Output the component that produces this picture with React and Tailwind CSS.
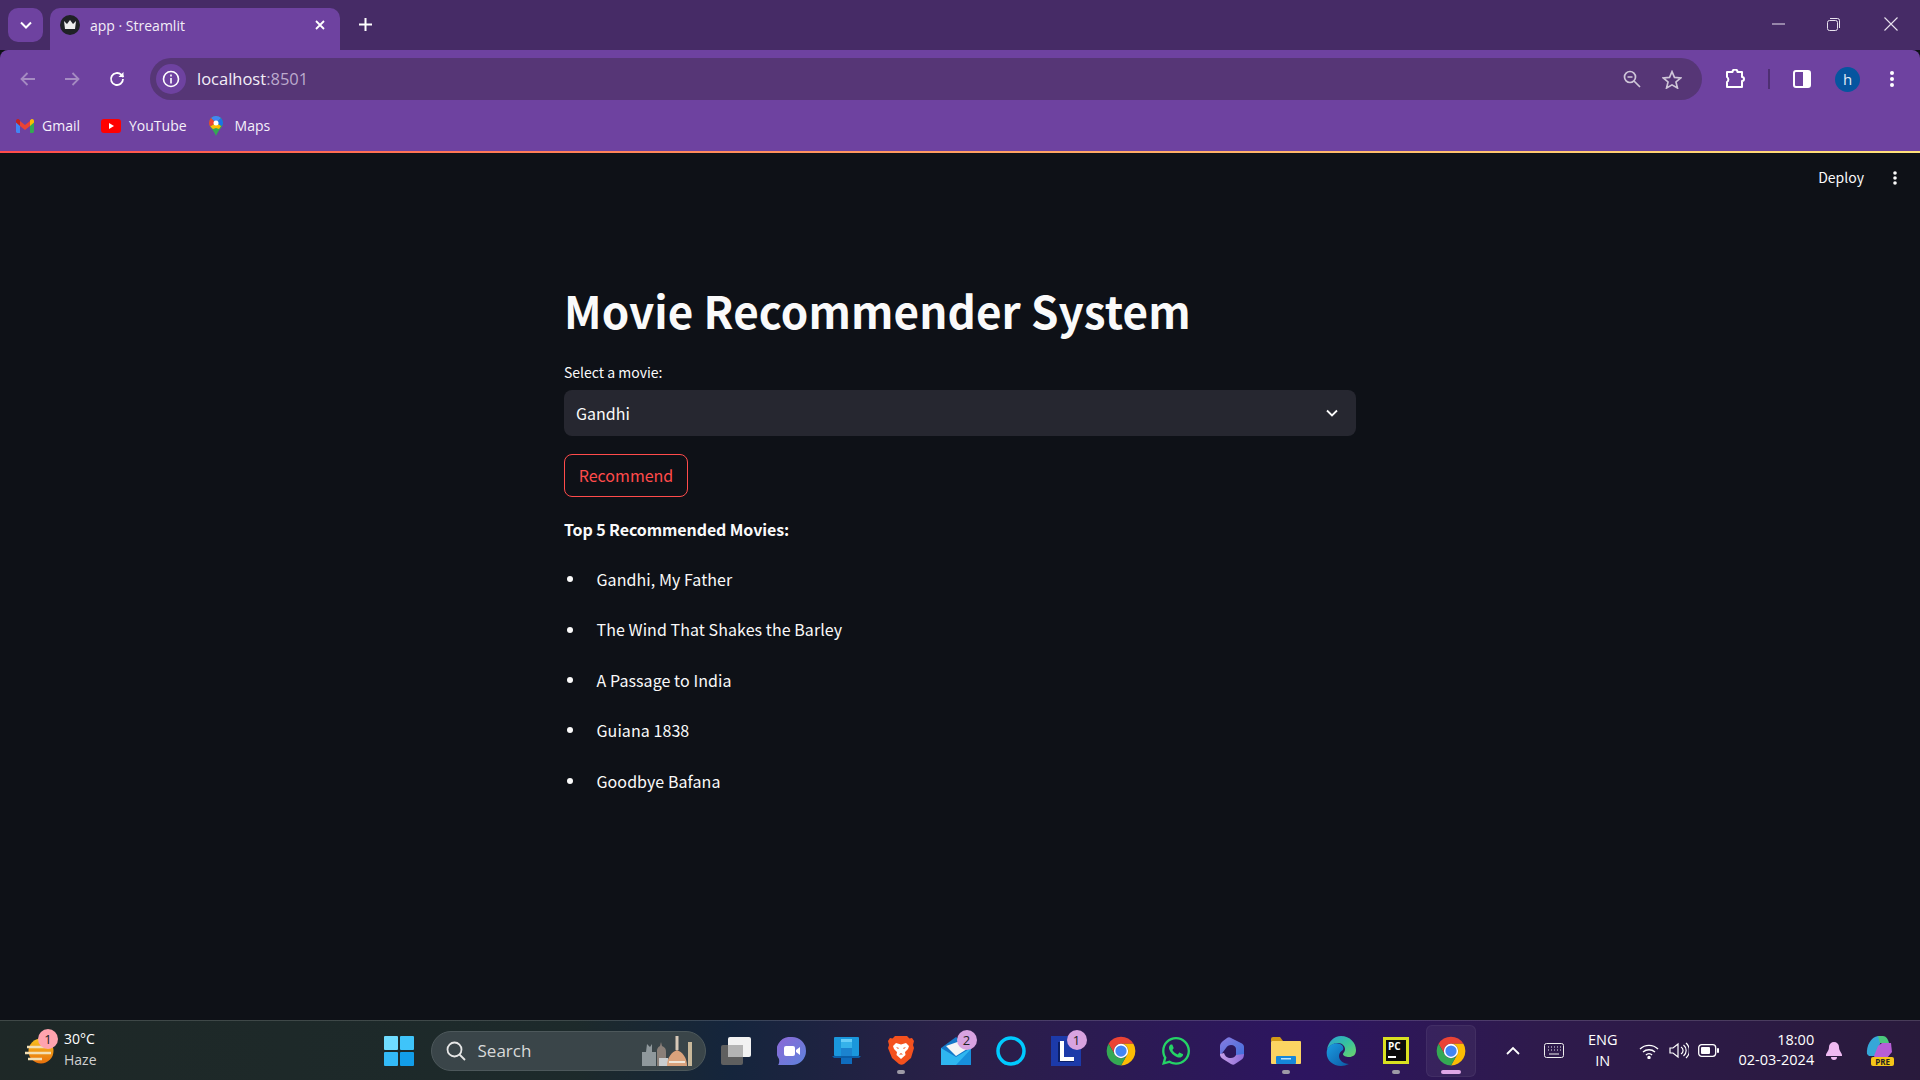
import React from 'react'
import { FaWhatsapp } from 'react-icons/fa'

const sans = "font-['Noto_Sans_CJK_SC','Noto_Sans',sans-serif]"
const ui = "font-['Open_Sans','Noto_Sans',sans-serif]"

const movies = ['Gandhi, My Father', 'The Wind That Shakes the Barley', 'A Passage to India', 'Guiana 1838', 'Goodbye Bafana']

const GmailIcon = () => (
  <svg width="18" height="14" viewBox="0 0 18 14">
    <path d="M0 2v10.5C0 13.3.7 14 1.5 14H4V6z" fill="#4285f4" />
    <path d="M18 2v10.5c0 .8-.7 1.5-1.5 1.5H14V6z" fill="#34a853" />
    <path d="M4 7V2L9 6l5-4v5L9 11z" fill="#ea4335" />
    <path d="M0 3.5V2C0 .3 1.8-.5 3 .5L4 1.3V7z" fill="#c5221f" />
    <path d="M18 3.5V2c0-1.7-1.8-2.5-3-1.5l-1 .8V7z" fill="#fbbc04" />
  </svg>
)

const YoutubeIcon = () => (
  <svg width="20" height="14" viewBox="0 0 20 14">
    <rect width="20" height="14" rx="3" fill="#f00" />
    <path d="M8 4l5 3-5 3z" fill="#fff" />
  </svg>
)

const MapsIcon = () => (
  <svg width="14" height="20" viewBox="0 0 14 20">
    <path d="M7 0a7 7 0 0 1 7 7c0 4-4 6-7 13C4 13 0 11 0 7a7 7 0 0 1 7-7z" fill="#34a853" />
    <path d="M2 2a7 7 0 0 1 5-2 7 7 0 0 1 5 2L7 7z" fill="#4285f4" />
    <path d="M2 2a7 7 0 0 0-2 5c0 1.5.5 2.5 1.3 3.5L7 7z" fill="#ea4335" />
    <path d="M12 2a7 7 0 0 1 2 5c0 1-.3 2-1 3L7 7z" fill="#1a73e8" />
    <path d="M1.3 10.5L7 7l5 3-2 3-3-1-3 1z" fill="#fbbc04" />
    <circle cx="7" cy="7" r="2.5" fill="#fff" />
  </svg>
)

const ChromeIcon = ({ size = 30 }) => (
  <svg width={size} height={size} viewBox="0 0 48 48">
    <path d="M24 12.5H43.9A23 23 0 0 0 4.1 12.5L14 29.75A11.5 11.5 0 0 1 24 12.5z" fill="#ea4335" />
    <path d="M33.96 29.75L24 47A23 23 0 0 0 43.9 12.5H24A11.5 11.5 0 0 1 33.96 29.75z" fill="#fbbc04" />
    <path d="M14 29.75L4.1 12.5A23 23 0 0 0 24 47L33.96 29.75A11.5 11.5 0 0 1 14 29.75z" fill="#34a853" />
    <circle cx="24" cy="24" r="11.5" fill="#fff" />
    <circle cx="24" cy="24" r="9" fill="#4285f4" />
  </svg>
)

const Badge = ({ n }) => (
  <span className={`absolute left-[28px] top-[5px] w-5 h-5 rounded-full bg-[#d8a3e0] text-[13px] leading-[20px] text-center text-[#222] ${ui}`}>{n}</span>
)

const TaskIcon = ({ children, dot, active }) => (
  <div className={`relative h-[52px] flex items-center justify-center rounded-md ${active ? 'w-[50px] mx-[2.5px] bg-white/5 border border-white/5' : 'w-[55px]'}`}>
    {children}
    {dot && <span className="absolute bottom-[3px] left-1/2 -translate-x-1/2 w-2 h-1 rounded-full bg-[#9d9aa6]" />}
    {active && <span className="absolute bottom-[2px] left-1/2 -translate-x-1/2 w-5 h-1 rounded-full bg-[#dfa6e6]" />}
  </div>
)

export default function App() {
  return (
    <div className="w-[1920px] h-[1080px] flex flex-col overflow-hidden bg-[#0e1117]">
      {/* tab strip */}
      <div className="h-[50px] shrink-0 bg-[#462b66] flex items-start pl-2 text-white">
        <div className="w-[35px] h-[34px] mt-2 rounded-[10px] bg-[#6e42a0] flex items-center justify-center">
          <svg width="12" height="8" viewBox="0 0 12 8" fill="none" stroke="#fff" strokeWidth="2"><path d="M1 1.5l5 5 5-5" /></svg>
        </div>
        <div className="w-[290px] h-[42px] mt-2 ml-[7px] rounded-t-[10px] bg-[#6e42a0] flex items-center pl-[10px] pr-[15px] pb-2">
          <span className="w-5 h-5 rounded-full bg-[#1f2126] flex items-center justify-center">
            <svg width="14" height="10" viewBox="0 0 14 10"><path d="M1 1l3 3 3-4 3 4 3-3-1 8H2z" fill="#eee" /></svg>
          </span>
          <span className={`ml-[10px] text-[14px] text-[#f2edf7] ${ui}`}>app · Streamlit</span>
          <svg className="ml-auto" width="10" height="10" viewBox="0 0 10 10" stroke="#fff" strokeWidth="1.8"><path d="M1 1l8 8M9 1l-8 8" /></svg>
        </div>
        <svg className="ml-[19px] mt-[18px]" width="13" height="13" viewBox="0 0 13 13" stroke="#fff" strokeWidth="2"><path d="M6.5 0v13M0 6.5h13" /></svg>
        <div className="ml-auto flex items-center h-[50px] pr-[22px] pb-[2px]">
          <svg className="mr-[42px]" width="13" height="2" viewBox="0 0 13 2"><path d="M0 1h13" stroke="#e8e2ee" /></svg>
          <svg className="mr-[44px]" width="13" height="13" viewBox="0 0 13 13" fill="none" stroke="#e8e2ee"><rect x=".5" y="2.5" width="10" height="10" rx="2" /><path d="M3 .5h7.5a2 2 0 0 1 2 2V10" /></svg>
          <svg width="14" height="14" viewBox="0 0 14 14" stroke="#e8e2ee" strokeWidth="1.1"><path d="M.5.5l13 13M13.5.5l-13 13" /></svg>
        </div>
      </div>

      {/* toolbar */}
      <div className="h-[58px] shrink-0 bg-[#6e42a0] rounded-t-[8px] flex items-center text-white">
        <svg className="ml-[20px]" width="16" height="14" viewBox="0 0 16 14" fill="none" stroke="#a58bc2" strokeWidth="1.8"><path d="M15 7H2M7.5 1L1.5 7l6 6" /></svg>
        <svg className="ml-[28px]" width="16" height="14" viewBox="0 0 16 14" fill="none" stroke="#a58bc2" strokeWidth="1.8"><path d="M1 7h13M8.5 1l6 6-6 6" /></svg>
        <svg className="ml-[29px]" width="16" height="16" viewBox="0 0 16 16" fill="none" stroke="#fff" strokeWidth="1.8"><path d="M14 8a6 6 0 1 1-1.8-4.3L14.5 6" /><path d="M14.5 1v5h-5" fill="#fff" stroke="none" /></svg>
        <div className="ml-[25px] w-[1552px] h-[42px] rounded-full bg-[#563676] flex items-center pl-[6px] pr-[20px]">
          <span className="w-[30px] h-[30px] rounded-full bg-[#6e42a0] flex items-center justify-center">
            <svg width="18" height="18" viewBox="0 0 18 18" fill="none" stroke="#fff" strokeWidth="1.6"><circle cx="9" cy="9" r="7.5" /><path d="M9 8v5.5M9 4.5v2" /></svg>
          </span>
          <span className={`ml-[11px] text-[16.5px] text-[#f3eef8] ${ui}`}>localhost<span className="text-[#bcaacd]">:8501</span></span>
          <svg className="ml-auto" width="18" height="18" viewBox="0 0 18 18" fill="none" stroke="#cfc6d8" strokeWidth="1.7"><circle cx="7" cy="7" r="5.5" /><path d="M11 11l6 6M4.5 7h5" /></svg>
          <svg className="ml-[21px]" width="20" height="19" viewBox="0 0 24 23" fill="none" stroke="#cfc6d8" strokeWidth="2"><path d="M12 2l3 7 7.5.6-5.7 4.9 1.8 7.3L12 18l-6.6 3.8 1.8-7.3L1.5 9.6 9 9z" /></svg>
        </div>
        <svg className="ml-[23px]" width="22" height="20" viewBox="0 0 22 20" fill="none" stroke="#fff" strokeWidth="2" strokeLinejoin="round"><path d="M2 3h5.5a2.5 2.5 0 0 1 5 0H17v5a2 2 0 0 1 0 4v6H2v-5a3 3 0 0 0 0-5z" /></svg>
        <span className="ml-[21px] w-[2px] h-5 bg-[#4e2f72]" />
        <svg className="ml-[23px]" width="18" height="18" viewBox="0 0 18 18"><rect x="1" y="1" width="16" height="16" rx="2" fill="none" stroke="#fff" strokeWidth="2" /><rect x="10" y="1" width="7" height="16" fill="#fff" /></svg>
        <span className={`ml-[24px] w-[25px] h-[25px] rounded-full bg-[#05559f] text-[15px] leading-[24px] text-center text-[#e6edf5] ${ui}`}>h</span>
        <svg className="ml-[30px]" width="4" height="16" viewBox="0 0 4 16" fill="#fff"><circle cx="2" cy="2" r="2" /><circle cx="2" cy="8" r="2" /><circle cx="2" cy="14" r="2" /></svg>
      </div>

      {/* bookmarks */}
      <div className={`h-[43px] shrink-0 bg-[#6e42a0] flex items-center pl-[16px] pb-2 text-[14px] text-[#f5f0fa] ${ui}`}>
        <GmailIcon />
        <span className="ml-[8px]">Gmail</span>
        <span className="ml-[21px]"><YoutubeIcon /></span>
        <span className="ml-[8px]">YouTube</span>
        <span className="ml-[22px]"><MapsIcon /></span>
        <span className="ml-[12px]">Maps</span>
      </div>

      {/* streamlit page */}
      <div className={`relative flex-1 min-h-0 ${sans} text-[#fafafa]`}>
        <div className="h-[2px] bg-gradient-to-r from-[#ff4b4b] to-[#ffe27a]" />
        <div className="absolute right-[23px] top-[16px] flex items-center text-[14px]">
          <span>Deploy</span>
          <svg className="ml-[29px]" width="4" height="14" viewBox="0 0 4 14" fill="#fafafa"><circle cx="2" cy="2" r="1.8" /><circle cx="2" cy="7" r="1.8" /><circle cx="2" cy="12" r="1.8" /></svg>
        </div>
        <div className="w-[792px] mx-auto pt-[127px]">
          <h1 className="text-[44px] leading-[60px] font-bold tracking-[0.1px]">Movie Recommender System</h1>
          <label className="block mt-[22px] text-[14px] leading-[20px]">Select a movie:</label>
          <div className="mt-[8px] h-[46px] rounded-lg bg-[#262730] flex items-center px-[12px] text-[16px]">
            <span>Gandhi</span>
            <svg className="ml-auto mr-[6px]" width="12" height="8" viewBox="0 0 12 8" fill="none" stroke="#fafafa" strokeWidth="1.8"><path d="M1 1.5l5 5 5-5" /></svg>
          </div>
          <button className="block mt-[18px] w-[124px] h-[43px] pb-[2px] rounded-lg border border-[#ff4b4b] text-[16px] text-[#ff4b4b]">Recommend</button>
          <p className="mt-[20px] text-[16px] leading-[24px] font-bold tracking-[-0.1px]">Top 5 Recommended Movies:</p>
          <ul className="mt-[26px] flex flex-col gap-[26px] ml-[3px]">
            {movies.map(m => (
              <li key={m} className="flex items-center gap-[23.5px] text-[16px] leading-[24.4px] tracking-[0.07px]">
                <span className="w-[6px] h-[6px] rounded-full bg-[#fafafa]" />
                {m}
              </li>
            ))}
          </ul>
        </div>
      </div>

      {/* taskbar */}
      <div className={`relative h-[60px] shrink-0 border-t border-white/15 bg-[linear-gradient(90deg,#1e2827_0%,#1d2a2b_30%,#15253c_38%,#2a1f48_50%,#2d1560_68%,#2e1a4c_80%,#291a3c_100%)] flex items-center text-white ${ui}`}>
        <div className="relative ml-[24px] w-[32px] h-[32px]">
          <svg width="32" height="32" viewBox="0 0 32 32">
            <defs>
              <linearGradient id="sun" x1="0" y1="0" x2="0" y2="1"><stop offset="0" stopColor="#f9c21f" /><stop offset="1" stopColor="#e8700c" /></linearGradient>
            </defs>
            <circle cx="17" cy="16" r="12.5" fill="url(#sun)" />
            <path d="M3 12h24M1 18h26M4 24h14" stroke="#f3dfb4" strokeWidth="2.5" />
          </svg>
          <span className="absolute left-[14px] -top-[6px] w-5 h-5 rounded-full bg-[#ffa3ae] text-[13px] leading-[20px] text-center text-[#222]">1</span>
        </div>
        <div className="ml-[8px] -mt-[3px] text-[14px] leading-[21px]">
          <div>30°C</div>
          <div className="text-[#d0d0d0]">Haze</div>
        </div>
        <svg className="ml-[287px]" width="30" height="30" viewBox="0 0 30 30">
          <rect width="14" height="14" rx="1" fill="#6fdcff" /><rect x="16" width="14" height="14" rx="1" fill="#3fc4fa" />
          <rect y="16" width="14" height="14" rx="1" fill="#33baf7" /><rect x="16" y="16" width="14" height="14" rx="1" fill="#129de8" />
        </svg>
        <div className="ml-[17px] w-[275px] h-[40px] rounded-full bg-[#3a4549] border border-[#4d585b] flex items-center pl-[14px] pr-[10px]">
          <svg width="20" height="20" viewBox="0 0 20 20" fill="none" stroke="#e6e6e6" strokeWidth="1.8"><circle cx="8.5" cy="8.5" r="7" /><path d="M13.5 13.5L19 19" /></svg>
          <span className="ml-[12px] text-[17px] text-[#d8dada]">Search</span>
          <svg className="ml-auto" width="54" height="34" viewBox="0 0 54 34">
            <path d="M1 32V18h4l1-8 3 3 2-3v8h4v14z" fill="#8f989c" />
            <path d="M16 32V18a6 6 0 0 1 3-6l1-4 1 4a6 6 0 0 1 4 6v14z" fill="#8a7f78" />
            <rect x="18" y="24" width="9" height="8" fill="#c9ccce" />
            <path d="M26 32c0-9 5-14 10-16 5 2 10 7 10 16z" fill="#d9a27c" />
            <path d="M36 2v14" stroke="#d8c9b8" strokeWidth="3" />
            <path d="M28 28h16" stroke="#f0e6d8" strokeWidth="2" />
            <rect x="47" y="8" width="4" height="24" fill="#c9b89a" />
          </svg>
        </div>
        <div className="ml-[3px] flex items-center">
          <TaskIcon>
            <svg width="30" height="28" viewBox="0 0 30 28"><rect x="0" y="8" width="22" height="20" rx="2" fill="#5f5f5f" /><rect x="7" y="0" width="23" height="20" rx="2" fill="#f2f2f2" /><rect x="7" y="8" width="15" height="12" fill="#b4b4b4" /></svg>
          </TaskIcon>
          <TaskIcon>
            <svg width="29" height="28" viewBox="0 0 29 28">
              <defs><linearGradient id="meet" x1="0" y1="0" x2="1" y2="1"><stop offset="0" stopColor="#8d68d6" /><stop offset="1" stopColor="#5d83dc" /></linearGradient></defs>
              <path d="M15 0a14 14 0 0 1 0 28H1c1-1 1.5-3 1-6A14 14 0 0 1 15 0z" fill="url(#meet)" />
              <rect x="7" y="9" width="11" height="10" rx="2" fill="#fff" /><path d="M19 13l4-3v8l-4-3z" fill="#fff" />
            </svg>
          </TaskIcon>
          <TaskIcon>
            <svg width="29" height="27" viewBox="0 0 29 27"><rect x="2" y="0" width="25" height="19" rx="1" fill="#1a97dc" /><rect x="9" y="2" width="11" height="3" fill="#66cdf7" /><rect x="9" y="5" width="11" height="6" fill="#35b2ea" /><rect x="9" y="11" width="11" height="8" fill="#1b83cf" /><path d="M0 19h29l-2 2H2z" fill="#0a5ea8" /><rect x="9" y="21" width="11" height="6" fill="#0f6cbd" /></svg>
          </TaskIcon>
          <TaskIcon dot>
            <svg width="26" height="29" viewBox="0 0 26 29">
              <path d="M7 0h12l2.5 2.5L24 2l2 3-1 4 1 3-3 10-7 6c-1.5 1-3.5 1-5 0l-7-6L0 12l1-3-1-4 2-3 2.5.5z" fill="#f4511e" />
              <path d="M8 7l5 1.5L18 7l3 3-1 3-3 3 .5 3L13 23l-4.500-4 .5-3-3-3-1-3z" fill="#fff" />
              <path d="M8 11l3 1-1 1zM18 11l-3 1 1 1zM13 17l-2 1.5h4z" fill="#f4511e" />
            </svg>
          </TaskIcon>
          <TaskIcon>
            <svg width="30" height="28" viewBox="0 0 30 28"><path d="M0 11L15 0l15 11v17H0z" fill="#1478c8" /><path d="M5 9L22 3l4 9-11 7z" fill="#f5f5f5" /><path d="M0 11l15 9 15-9v17H0z" fill="#2fb6f0" /><path d="M30 12L15 28h15z" fill="#1186d6" opacity="0.8" /></svg>
            <Badge n="2" />
          </TaskIcon>
          <TaskIcon>
            <svg width="30" height="30" viewBox="0 0 30 30" fill="none"><path d="M9 29l-3-4.5 5 2z" fill="#00caff" /><circle cx="15" cy="15" r="13" stroke="#00caff" strokeWidth="3.5" /></svg>
          </TaskIcon>
          <TaskIcon>
            <svg width="30" height="30" viewBox="0 0 30 30"><rect width="30" height="30" fill="#1c3aa9" /><path d="M7 6h6v17h10v3H7z" fill="#0b1f66" /><path d="M9 5h4v16h10v4H9z" fill="#fff" /></svg>
            <Badge n="1" />
          </TaskIcon>
          <TaskIcon><ChromeIcon /></TaskIcon>
          <TaskIcon><FaWhatsapp size={32} color="#25d366" /></TaskIcon>
          <TaskIcon>
            <svg width="26" height="28" viewBox="0 0 26 28">
              <defs>
                <linearGradient id="bingA" x1="0" y1="0" x2="1" y2="1"><stop offset="0" stopColor="#8a7be0" /><stop offset="1" stopColor="#3f6fdc" /></linearGradient>
                <linearGradient id="bingB" x1="0" y1="0" x2="1" y2="0"><stop offset="0" stopColor="#c7a0e8" /><stop offset="1" stopColor="#8c6bd8" /></linearGradient>
              </defs>
              <path d="M9 1c1-1 3-1 4 0l10 5c2 1 3 2 3 4v8l-8 1v-7c0-2-2-4-5-4-2 0-4 1-5 3L2 19V9c0-2 1-3 3-5z" fill="url(#bingA)" />
              <path d="M2 17c0 2 1 4 3 5l8 5c1.5 1 3 1 4 0l6-4c2-1 3-3 3-6l-8 1c-1 2-3 3-5 3-4 0-6-2-7-5z" fill="url(#bingB)" />
            </svg>
          </TaskIcon>
          <TaskIcon dot>
            <svg width="30" height="27" viewBox="0 0 30 27"><path d="M0 2a2 2 0 0 1 2-2h7l3 4H0z" fill="#d39a16" /><rect y="4" width="30" height="23" rx="1" fill="#fcd462" /><rect x="5" y="19" width="20" height="8" rx="1" fill="#1687d9" /><rect x="10" y="21" width="10" height="1.5" fill="#bde3fa" /></svg>
          </TaskIcon>
          <TaskIcon>
            <svg width="30" height="30" viewBox="0 0 30 30">
              <defs>
                <linearGradient id="edgeA" x1="0" y1="0" x2="1" y2="1"><stop offset="0" stopColor="#2c9fd8" /><stop offset="0.5" stopColor="#35c1a0" /><stop offset="1" stopColor="#6fd36a" /></linearGradient>
                <linearGradient id="edgeB" x1="0" y1="0" x2="1" y2="1"><stop offset="0" stopColor="#1b9de2" /><stop offset="1" stopColor="#0c59a4" /></linearGradient>
              </defs>
              <path d="M15 0c9 0 15 7 15 14 0 5-3 7-7 7-3 0-6-1-6-3 0-1 2-2 2-5 0-3-3-6-7-6-5 0-9 3-11 7C2 6 8 0 15 0z" fill="url(#edgeA)" />
              <path d="M1 14c2-5 8-8 13-6 3 1 4 4 3 6-2 1-4 3-4 6 0 4 4 8 10 8-3 1-5 2-8 2C6 30-1 23 1 14z" fill="url(#edgeB)" />
            </svg>
          </TaskIcon>
          <TaskIcon dot>
            <svg width="26" height="27" viewBox="0 0 26 27"><rect width="26" height="27" fill="#d9e021" /><rect x="3" y="3" width="20" height="21" fill="#0b0b0b" /><text x="5" y="13" fontSize="10" fontWeight="700" fill="#fff" fontFamily="Open Sans">PC</text><rect x="5" y="19" width="8" height="2" fill="#fff" /></svg>
          </TaskIcon>
          <TaskIcon active><ChromeIcon /></TaskIcon>
        </div>
        <div className="absolute right-0 top-0 h-full w-[422px] flex items-center">
          <svg className="ml-[8px]" width="14" height="9" viewBox="0 0 14 9" fill="none" stroke="#fff" strokeWidth="1.8"><path d="M1 8l6-6 6 6" /></svg>
          <svg className="ml-[24px]" width="20" height="15" viewBox="0 0 20 15" fill="none" stroke="#eee"><rect x=".5" y=".5" width="19" height="14" rx="2" /><path d="M4 4h1M7 4h1M10 4h1M13 4h1M16 4h1M4 7h1M7 7h1M10 7h1M13 7h1M16 7h1M5 11h10" /></svg>
          <div className="ml-[24px] -mt-[1px] text-[14.5px] leading-[21px] text-center">
            <div>ENG</div>
            <div>IN</div>
          </div>
          <svg className="ml-[21px]" width="20" height="16" viewBox="0 0 20 16" fill="none" stroke="#fff" strokeWidth="1.4"><path d="M1 6a13 13 0 0 1 18 0M4 9a9 9 0 0 1 12 0M7 12a4 4 0 0 1 6 0" /><circle cx="10" cy="14.5" r="1" fill="#fff" /></svg>
          <svg className="ml-[10px]" width="20" height="17" viewBox="0 0 20 17" fill="none" stroke="#fff" strokeWidth="1.2"><path d="M1 6h3l5-4v13l-5-4H1z" /><path d="M12 5a4 4 0 0 1 0 7M14.5 3a7 7 0 0 1 0 11M17 1a10 10 0 0 1 0 15" /></svg>
          <svg className="ml-[9px]" width="21" height="13" viewBox="0 0 21 13"><rect x=".7" y=".7" width="17" height="11.6" rx="3" fill="none" stroke="#fff" strokeWidth="1.3" /><rect x="3" y="3" width="9" height="7" rx="1" fill="#fff" /><rect x="19" y="4" width="2" height="5" rx="1" fill="#fff" /></svg>
          <div className="ml-[20px] -mt-[1px] text-[14.5px] leading-[20px] text-right">
            <div>18:00</div>
            <div>02-03-2024</div>
          </div>
          <svg className="ml-[12px]" width="16" height="18" viewBox="0 0 16 18" fill="#efbaf2"><path d="M8 0a5 5 0 0 1 5 5c0 4 3 6 3 8v1H0v-1c0-2 3-4 3-8a5 5 0 0 1 5-5z" /><path d="M5 15h6a3 3 0 0 1-6 0z" /></svg>
          <div className="relative ml-[23px] w-[30px] h-[30px]">
            <svg width="28" height="24" viewBox="0 0 28 24"><path d="M2 18C1 10 6 1 13 0h5l-5 13-3 7H4z" fill="#35a7d8" /><path d="M9 20l4-10 4-3h9l1 9-5 6H10z" fill="#b65fd6" /><path d="M13 0h5c3 0 5 3 6 7h-9z" fill="#4bc87d" /></svg>
            <span className="absolute left-[6px] bottom-0 w-[23px] h-[9px] rounded-[2px] bg-[#f5c518] text-[8px] leading-[9px] font-bold text-center text-[#222]">PRE</span>
          </div>
        </div>
      </div>
    </div>
  )
}
